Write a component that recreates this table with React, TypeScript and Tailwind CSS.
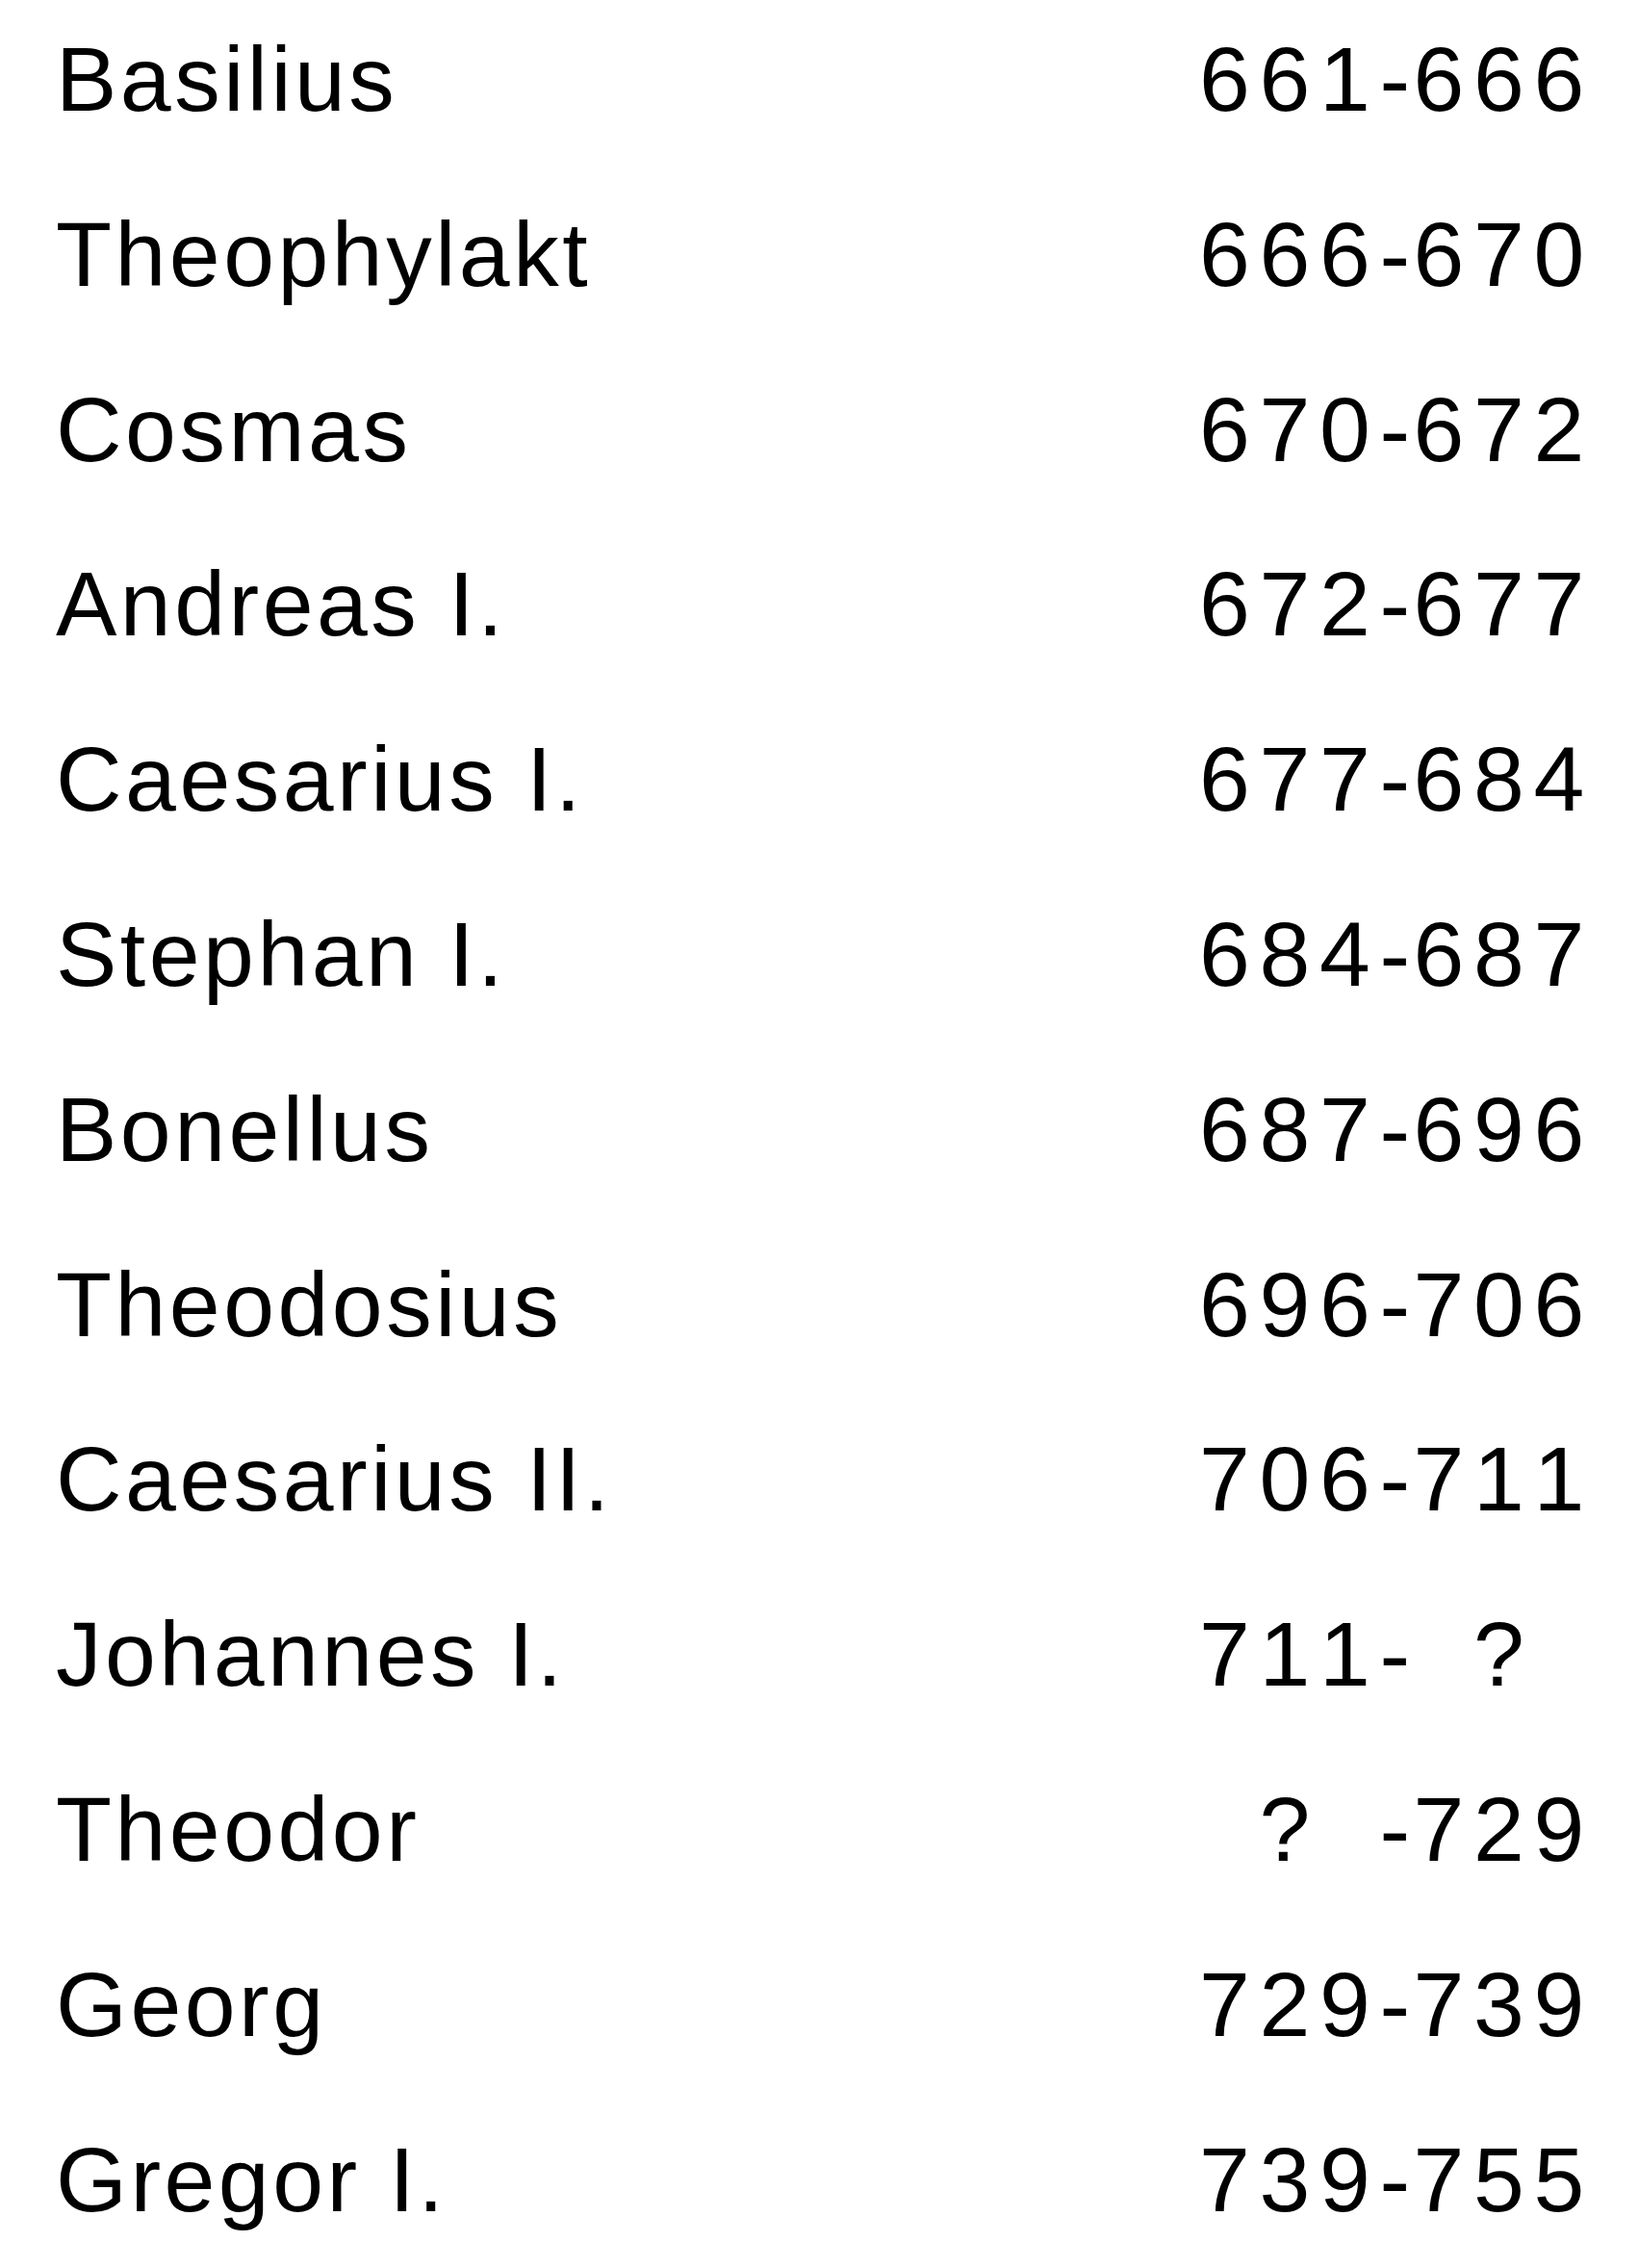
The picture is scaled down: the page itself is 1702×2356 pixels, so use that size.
const rows: [string, string[]][] = [
  ['Basilius', ['6', '6', '1', '-', '6', '6', '6']],
  ['Theophylakt', ['6', '6', '6', '-', '6', '7', '0']],
  ['Cosmas', ['6', '7', '0', '-', '6', '7', '2']],
  ['Andreas I.', ['6', '7', '2', '-', '6', '7', '7']],
  ['Caesarius I.', ['6', '7', '7', '-', '6', '8', '4']],
  ['Stephan I.', ['6', '8', '4', '-', '6', '8', '7']],
  ['Bonellus', ['6', '8', '7', '-', '6', '9', '6']],
  ['Theodosius', ['6', '9', '6', '-', '7', '0', '6']],
  ['Caesarius II.', ['7', '0', '6', '-', '7', '1', '1']],
  ['Johannes I.', ['7', '1', '1', '-', '', '?', '']],
  ['Theodor', ['', '?', '', '-', '7', '2', '9']],
  ['Georg', ['7', '2', '9', '-', '7', '3', '9']],
  ['Gregor I.', ['7', '3', '9', '-', '7', '5', '5']],
]

export default function App() {
  return (
    <div className="w-[1702px] h-[2356px] bg-white text-black pt-[35px] pl-[58px] font-['Liberation_Sans',Arial,sans-serif] text-[95px] leading-none">
      {rows.map(([name, years]) => (
        <div key={name} className="flex h-[181.8px]">
          <div className="w-[1188px] tracking-[3.5px] whitespace-pre">{name}</div>
          <div className="grid grid-cols-[62.5px_62.5px_62.5px_35px_62.5px_62.5px_62.5px]">
            {years.map((c, i) => (
              <span key={i} className="block">{c}</span>
            ))}
          </div>
        </div>
      ))}
    </div>
  )
}
